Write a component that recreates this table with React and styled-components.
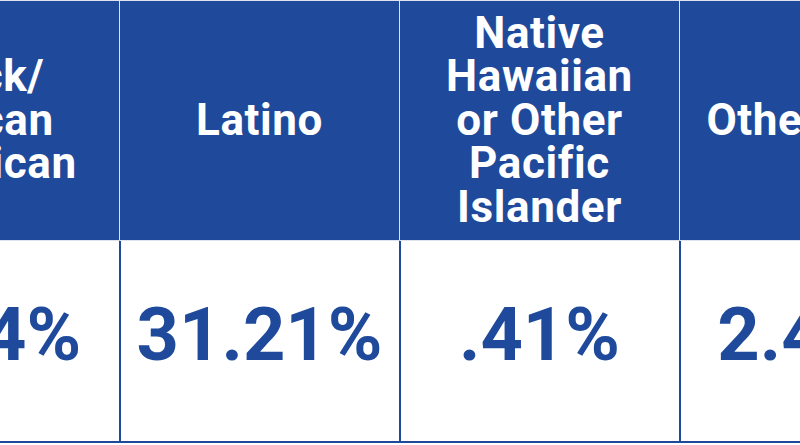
import React from "react";
import styled, { createGlobalStyle } from "styled-components";

const GlobalStyle = createGlobalStyle`
  html, body {
    margin: 0;
    padding: 0;
    background: #ffffff;
  }
  body {
    font-family: Roboto, "Liberation Sans", sans-serif;
  }
`;

const BLUE = "#1f4a9c";
const RULE = "#dde3f0";

const Viewport = styled.div`
  width: 800px;
  height: 445px;
  overflow: hidden;
  background: #ffffff;
`;

const Table = styled.div`
  display: grid;
  grid-template-columns: repeat(4, 280px);
  grid-template-rows: 240px 203px;
  margin-left: -160px;
  width: 1120px;
`;

const HeadCell = styled.div`
  display: flex;
  align-items: center;
  justify-content: center;
  box-sizing: border-box;
  background: ${BLUE};
  border-top: 1px solid ${RULE};
  border-right: 2px solid ${RULE};
  margin-right: ${(p) => (p.$last ? "0" : "-1px")};
  color: #ffffff;
  font-weight: 700;
  font-size: 44px;
  line-height: 43.5px;
  letter-spacing: 0.6px;
  text-align: center;
  padding: 0 10px;
`;

const ValueCell = styled.div`
  display: flex;
  align-items: center;
  justify-content: center;
  box-sizing: border-box;
  border-right: 2px solid ${BLUE};
  border-bottom: 2px solid ${BLUE};
  border-top: 1px solid ${RULE};
  margin-right: ${(p) => (p.$last ? "0" : "-1px")};
  color: ${BLUE};
  font-weight: 700;
  font-size: 74px;
  padding-bottom: 14px;
`;

const rows = [
  { label: ["Black/", "African", "American"], value: "9.84%" },
  { label: ["Latino"], value: "31.21%" },
  { label: ["Native", "Hawaiian", "or Other", "Pacific", "Islander"], value: ".41%" },
  { label: ["Other Race"], value: "2.49%" },
];

const App = () => {
  return (
    <Viewport>
      <GlobalStyle />
      <Table>
        {rows.map((r, i) => (
          <HeadCell key={"h" + i} $last={i === rows.length - 1}>
            <div>
              {r.label.map((line) => (
                <div key={line}>{line}</div>
              ))}
            </div>
          </HeadCell>
        ))}
        {rows.map((r, i) => (
          <ValueCell key={"v" + i} $last={i === rows.length - 1}>
            {r.value}
          </ValueCell>
        ))}
      </Table>
    </Viewport>
  );
};

export default App;
